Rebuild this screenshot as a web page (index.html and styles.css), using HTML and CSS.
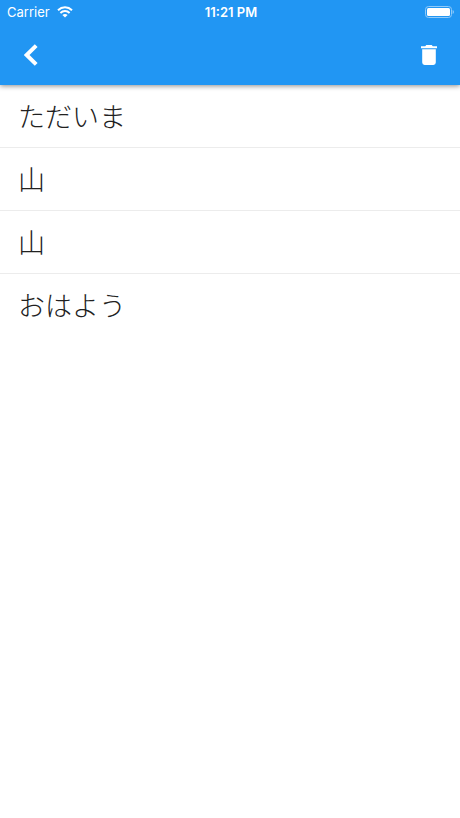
FILE: index.html
```html
<!DOCTYPE html>
<html lang="ja">
<head>
    <meta charset="UTF-8">
    <meta name="viewport" content="width=device-width, initial-scale=1.0">
    <title>document</title>
    <link rel="stylesheet" href="styles.css">
</head>
<body>
    <header class="header">
        <div class="status-bar">
            <div class="carrier">
                <span>Carrier</span>
                <svg class="wifi" viewBox="0 0 16 12" width="16" height="12">
                    <path d="M1 4.2C5 0.4 11 0.4 15 4.2" />
                    <path d="M3.4 6.9C6 4.5 10 4.5 12.6 6.9" />
                    <path class="dot" d="M8 11.6L5.4 9C6.8 7.7 9.2 7.7 10.6 9Z" />
                </svg>
            </div>
            <div class="time">11:21 PM</div>
            <div class="battery">
                <svg viewBox="0 0 30 12" width="30" height="12">
                    <rect class="case" x="0.5" y="0.5" width="26" height="11" rx="3" />
                    <rect class="level" x="2" y="2" width="23" height="8" rx="1.5" />
                    <path class="tip" d="M27.6 4C29.4 4.6 29.4 7.4 27.6 8Z" />
                </svg>
            </div>
        </div>
        <nav class="nav-bar">
            <button type="button" class="icon-btn" aria-label="戻る">
                <svg viewBox="0 0 14 22" width="14" height="22">
                    <path class="chevron" d="M12.2 1.6L2.6 11L12.2 20.4" />
                </svg>
            </button>
            <button type="button" class="icon-btn" aria-label="削除">
                <svg viewBox="0 0 16 20" width="16" height="20">
                    <path d="M1.2 4.2H14.8V17.6Q14.8 20 12.4 20H3.6Q1.2 20 1.2 17.6ZM0 1.2H4.2L5.3 0H10.7L11.8 1.2H16V3.3H0Z" />
                </svg>
            </button>
        </nav>
    </header>
    <ul class="word-list">
        <li>ただいま</li>
        <li>山</li>
        <li>山</li>
        <li>おはよう</li>
    </ul>
</body>
</html>
```
FILE: styles.css
```css
* {
    margin: 0;
    padding: 0;
    box-sizing: border-box;
}

body {
    background-color: #fff;
    color: #212121;
    font-family: Inter, "Noto Sans CJK JP", sans-serif;
}

.header {
    background-color: #2196f3;
    color: #fff;
    box-shadow: 0 1px 5px rgba(0, 0, 0, 0.45);
}

.status-bar {
    display: grid;
    grid-template-columns: 1fr auto 1fr;
    align-items: center;
    height: 24px;
    padding: 0 5px 0 7px;
    font-size: 13px;
}

.carrier {
    display: flex;
    align-items: center;
    gap: 7px;
}

.wifi {
    fill: none;
    stroke: #fff;
    stroke-width: 2;
}

.wifi .dot {
    fill: #fff;
    stroke: none;
}

.time {
    font-weight: 600;
}

.battery {
    display: flex;
    justify-content: flex-end;
}

.case {
    fill: none;
    stroke: #90caf9;
}

.level {
    fill: #fff;
}

.tip {
    fill: #90caf9;
}

.nav-bar {
    display: flex;
    justify-content: space-between;
    align-items: center;
    height: 61px;
    padding: 0 11px;
}

.icon-btn {
    display: flex;
    justify-content: center;
    align-items: center;
    width: 40px;
    height: 40px;
    border: none;
    background: none;
    cursor: pointer;
}

.icon-btn svg {
    fill: #fff;
}

.icon-btn .chevron {
    fill: none;
    stroke: #fff;
    stroke-width: 4;
}

.word-list {
    list-style: none;
}

.word-list li {
    padding: 10px 18px;
    border-bottom: 1px solid #ececec;
    font-family: "Noto Sans CJK JP", sans-serif;
    font-size: 27px;
    font-weight: 300;
    line-height: 42px;
}

.word-list li:last-child {
    border-bottom: none;
}
```
